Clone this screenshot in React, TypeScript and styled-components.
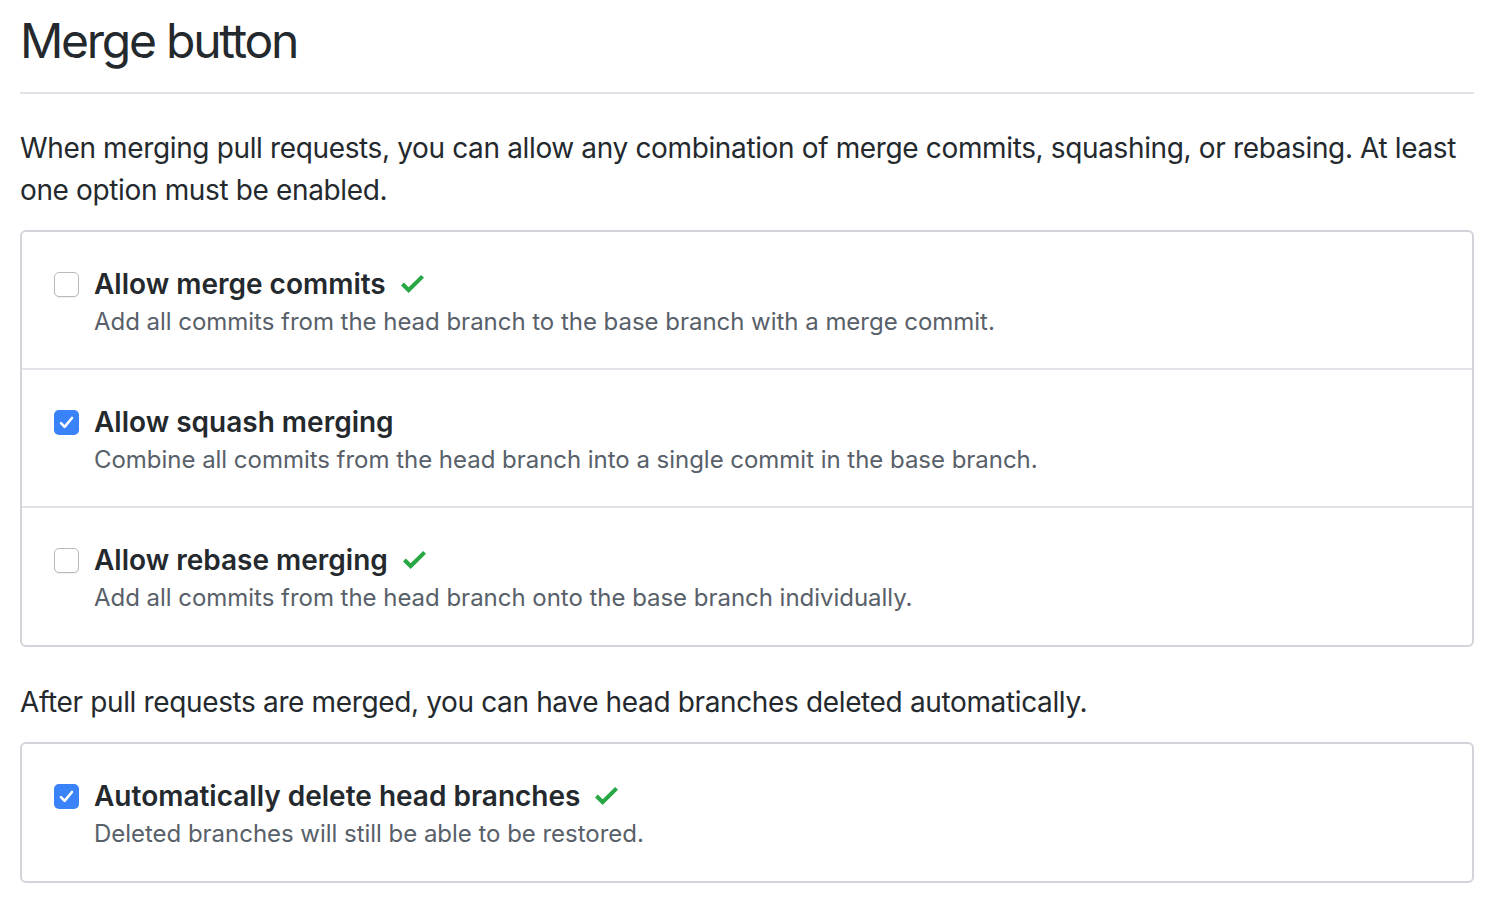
import React from "react";
import styled, { createGlobalStyle } from "styled-components";

const Global = createGlobalStyle`
  html, body { margin: 0; padding: 0; background: #ffffff; }
  body {
    font-family: Inter, "Noto Sans", "Liberation Sans", sans-serif;
    color: #24292e;
    -webkit-font-smoothing: antialiased;
  }
`;

const Page = styled.div`
  padding: 5px 22px 0 20px;
`;

const Subhead = styled.div`
  padding-bottom: 15px;
  margin-bottom: 33px;
  border-bottom: 2px solid #e1e4e8;
`;

const Heading = styled.h2`
  margin: 0;
  font-size: 48px;
  font-weight: 400;
  line-height: 72px;
  letter-spacing: -2.25px;
  color: #24292e;
`;

const Lead = styled.p<{ $top?: number }>`
  margin: ${(p) => p.$top ?? 0}px 0 19px;
  font-size: 28px;
  line-height: 42px;
  letter-spacing: -0.36px;
  color: #24292e;
`;

const Box = styled.div`
  border: 2px solid #d1d5da;
  border-radius: 6px;
  background: #fff;
`;

const Row = styled.label`
  display: flex;
  align-items: flex-start;
  padding: 31px 32px 29px;
  & + & {
    border-top: 2px solid #e1e4e8;
  }
  &:last-child {
    padding-bottom: 30px;
  }
`;

const Check = styled.span<{ $on: boolean }>`
  flex: none;
  box-sizing: border-box;
  width: 25px;
  height: 25px;
  margin-top: 9px;
  margin-right: 15px;
  border-radius: 5px;
  display: flex;
  align-items: center;
  justify-content: center;
  background: ${(p) => (p.$on ? "#3a82f7" : "#ffffff")};
  border: ${(p) => (p.$on ? "none" : "1px solid #b9b9b9")};
  box-shadow: ${(p) => (p.$on ? "none" : "0 1px 1px rgba(0,0,0,0.06)")};
`;

const Body = styled.div`
  display: flex;
  flex-direction: column;
`;

const Title = styled.div`
  display: flex;
  align-items: center;
  font-size: 28px;
  line-height: 42px;
  font-weight: 600;
  color: #24292e;
`;

const Desc = styled.div`
  font-size: 24px;
  line-height: 34px;
  color: #586069;
  letter-spacing: -0.03px;
`;

const Ok = styled.svg`
  margin-left: 15px;
  width: 23px;
  height: 18px;
  fill: #28a745;
`;

const GreenCheck = () => (
  <Ok viewBox="0 3.5 12 9.5" preserveAspectRatio="none">
    <path d="M12 5l-8 8-4-4 1.5-1.5L4 10l6.5-6.5L12 5z" />
  </Ok>
);

const BoxTick = () => (
  <svg width="15" height="13" viewBox="0 0 15 13">
    <path d="M2 7.2l3.6 3.6L13 2" fill="none" stroke="#fff" strokeWidth="2.6" strokeLinecap="round" strokeLinejoin="round" />
  </svg>
);

type Opt = { title: string; desc: string; on: boolean; ok: boolean };

const OptionRow = ({ o }: { o: Opt }) => (
  <Row>
    <Check $on={o.on}>{o.on && <BoxTick />}</Check>
    <Body>
      <Title>
        {o.title}
        {o.ok && <GreenCheck />}
      </Title>
      <Desc>{o.desc}</Desc>
    </Body>
  </Row>
);

const mergeOpts: Opt[] = [
  { title: "Allow merge commits", desc: "Add all commits from the head branch to the base branch with a merge commit.", on: false, ok: true },
  { title: "Allow squash merging", desc: "Combine all commits from the head branch into a single commit in the base branch.", on: true, ok: false },
  { title: "Allow rebase merging", desc: "Add all commits from the head branch onto the base branch individually.", on: false, ok: true },
];

const deleteOpts: Opt[] = [
  { title: "Automatically delete head branches", desc: "Deleted branches will still be able to be restored.", on: true, ok: true },
];

export default function App() {
  return (
    <>
      <Global />
      <Page>
        <Subhead>
          <Heading>Merge button</Heading>
        </Subhead>
        <Lead>
          When merging pull requests, you can allow any combination of merge commits, squashing, or rebasing. At least one option must be enabled.
        </Lead>
        <Box>
          {mergeOpts.map((o) => (
            <OptionRow key={o.title} o={o} />
          ))}
        </Box>
        <Lead $top={34}>After pull requests are merged, you can have head branches deleted automatically.</Lead>
        <Box>
          {deleteOpts.map((o) => (
            <OptionRow key={o.title} o={o} />
          ))}
        </Box>
      </Page>
    </>
  );
}
